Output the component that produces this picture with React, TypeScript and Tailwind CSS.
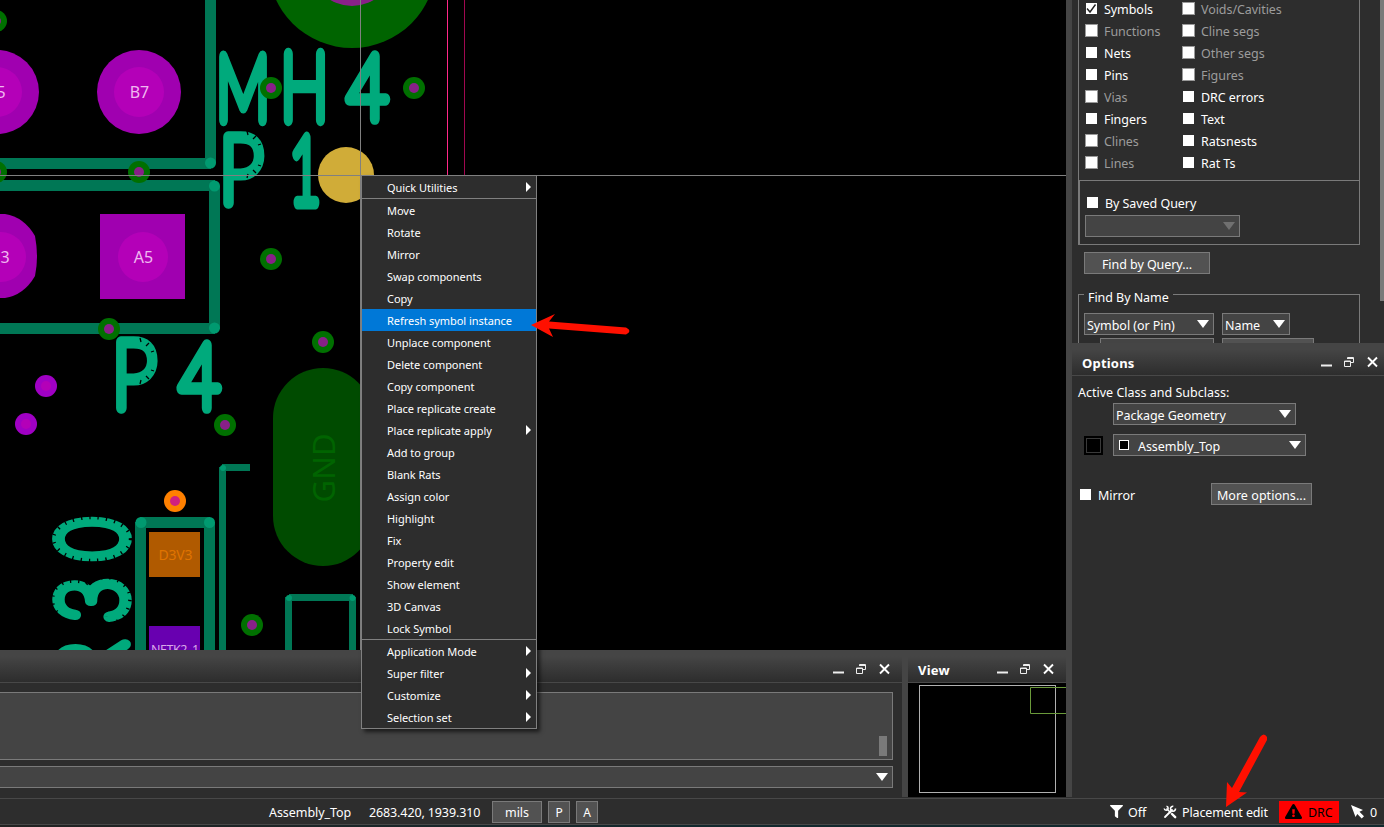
import React from "react";
import { FaFilter, FaExclamationTriangle } from "react-icons/fa";

const vias: [number, number, string, string][] = [
  [-4, 21, "#007000", "#882088"],
  [271, 88, "#007000", "#882088"],
  [414, 88, "#007000", "#882088"],
  [-4, 172, "#007000", "#882088"],
  [139, 172, "#007000", "#882088"],
  [271, 259, "#007000", "#882088"],
  [109, 329, "#007000", "#882088"],
  [323, 342, "#007000", "#882088"],
  [225, 425, "#007000", "#882088"],
  [252, 625, "#007000", "#882088"],
  [175, 501, "#ff8000", "#d02080"],
  [46, 386, "#a000c4", "#b400b8"],
  [26, 424, "#a000c4", "#b400b8"],
];

type SilkProps = { ch: string; cx: number; base: number; size: number; sx: number };

function Silk({ ch, cx, base, size, sx }: SilkProps) {
  return (
    <text
      transform={`translate(${cx} ${base}) scale(${sx} 1)`}
      textAnchor="middle"
      fontFamily="Lato, sans-serif"
      fontWeight="100"
      fontSize={size}
      fill="#00aa7c"
      stroke="#00aa7c"
      strokeWidth="10.500"
      strokeLinejoin="round"
      className="[vector-effect:non-scaling-stroke]"
    >
      {ch}
    </text>
  );
}

function Board() {
  return (
    <svg width="1066" height="650" viewBox="0 0 1066 650" className="block shrink-0 bg-black" fontFamily="'Noto Sans', sans-serif">
      <circle cx="352" cy="-36" r="84" fill="#006400" />
      <circle cx="352" cy="-36" r="42" fill="#882088" />
      <circle cx="139" cy="92" r="42" fill="#a000b0" />
      <circle cx="139" cy="92" r="25" fill="#b400b8" />
      <circle cx="-3" cy="92" r="42" fill="#a000b0" />
      <circle cx="-3" cy="92" r="25" fill="#b400b8" />
      <rect x="100" y="214" width="85" height="85" fill="#a000b0" />
      <circle cx="143" cy="257" r="25" fill="#b400b8" />
      <path d="M-10 214H5Q24 217 35 236Q39 257 35 276Q24 295 5 298H-10Z" fill="#a000b0" />
      <circle cx="1" cy="257" r="25" fill="#b400b8" />
      <g fill="#f0b8f0" fontSize="16" textAnchor="middle">
        <text x="139.5" y="98">B7</text>
        <text x="143.5" y="263">A5</text>
        <text x="1" y="98">5</text>
        <text x="3" y="263">.3</text>
      </g>
      <g fill="#007755">
        <path d="M205 0H216V163H205ZM0 158H211V169H0Z" />
        <path d="M0 180H215V191H0ZM209 186H220V329H209ZM0 323H215V334H0Z" />
        <path d="M135 522H146V650H135ZM204 522H215V650H204ZM140 517H210V528H140Z" />
        <path d="M219 467H226V650H219ZM222 464H250V471H222Z" />
        <path d="M285 597H292V650H285ZM349 597H356V650H349ZM289 594H353V601H289Z" />
      </g>
      <g fill="#009a70">
        <circle cx="210.500" cy="163" r="5.500" />
        <circle cx="214.500" cy="186" r="5.500" />
        <circle cx="214.500" cy="328" r="5.500" />
        <circle cx="141" cy="522.500" r="5.500" />
        <circle cx="209.500" cy="522.500" r="5.500" />
        <circle cx="223" cy="468" r="3" />
        <circle cx="289" cy="598" r="3" />
        <circle cx="352.500" cy="598" r="3" />
      </g>
      <Silk ch="M" cx={243} base={119.500} size={91} sx={0.66} />
      <Silk ch="H" cx={304.500} base={119.500} size={94} sx={0.68} />
      <Silk ch="4" cx={367.500} base={119} size={91} sx={0.78} />
      <Silk ch="P" cx={241} base={202.500} size={94} sx={0.85} />
      <Silk ch="1" cx={305} base={203} size={93} sx={0.57} />
      <Silk ch="P" cx={134} base={408} size={95} sx={0.85} />
      <Silk ch="4" cx={199.500} base={408} size={91} sx={0.78} />
      <g transform="rotate(-90)">
        <Silk ch="0" cx={-539} base={125} size={94} sx={0.76} />
        <Silk ch="3" cx={-600} base={125} size={94} sx={0.82} />
        <Silk ch="R" cx={-664} base={125} size={94} sx={0.78} />
      </g>
      <g stroke="#000" strokeWidth="1.300" fill="none">
        <ellipse cx="92" cy="539" rx="38.500" ry="21.500" strokeWidth="3.500" strokeDasharray="1.300 7" />
        <path d="M57 612Q50 605 54 591Q63 578 82 582" strokeWidth="3.500" strokeDasharray="1.300 7" />
        <path d="M86 584Q95 576 112 578Q131 585 130 600Q128 616 116 622" strokeWidth="3.500" strokeDasharray="1.300 7" />
        <path d="M247 131l1 4M256 136l-3 3M261 144l-3 1M261 166l-3-1M256 173l-3-3M247 178l1-4" />
        <path d="M140 338l1 4M149 343l-3 3M154 351l-3 1M154 371l-3-1M149 379l-3-3M140 384l1-4" />
      </g>
      <circle cx="346" cy="175" r="28" fill="#d0ac38" />
      <rect x="273" y="368" width="100" height="198" rx="50" fill="#004b00" />
      <text transform="translate(335 468) rotate(-90)" textAnchor="middle" fontSize="31" textLength="69" fill="#006400">
        GND
      </text>
      <rect x="149" y="532" width="51" height="45" fill="#b05a00" />
      <text x="175.500" y="560" textAnchor="middle" fontSize="14" textLength="34" fill="#e07400">
        D3V3
      </text>
      <rect x="149" y="626" width="51" height="24" fill="#6800b0" />
      <text x="175" y="654" textAnchor="middle" fontSize="12.500" textLength="48" fill="#d8a8e8">
        NETK2_1
      </text>
      {vias.map(([x, y, outer, inner]) => (
        <g key={`${x}-${y}`}>
          <circle cx={x} cy={y} r="11" fill={outer} />
          <circle cx={x} cy={y} r="5" fill={inner} />
        </g>
      ))}
      <rect x="447" y="0" width="1" height="175" fill="#ff2888" />
      <rect x="464" y="0" width="1" height="175" fill="#a00850" />
      <rect x="0" y="175" width="1066" height="1" fill="#808080" />
      <rect x="360" y="0" width="1" height="650" fill="#808080" />
    </svg>
  );
}

type Item = [label: string, submenu?: boolean];

const menuGroups: Item[][] = [
  [["Quick Utilities", true]],
  [
    ["Move"], ["Rotate"], ["Mirror"], ["Swap components"], ["Copy"], ["Refresh symbol instance"],
    ["Unplace component"], ["Delete component"], ["Copy component"], ["Place replicate create"],
    ["Place replicate apply", true], ["Add to group"], ["Blank Rats"], ["Assign color"], ["Highlight"],
    ["Fix"], ["Property edit"], ["Show element"], ["3D Canvas"], ["Lock Symbol"],
  ],
  [["Application Mode", true], ["Super filter", true], ["Customize", true], ["Selection set", true]],
];

function ContextMenu() {
  return (
    <div className="absolute top-[175px] left-[361px] w-[176px] divide-y divide-[#808080] border border-[#808080] bg-[#2d2d2d] text-[11px] tracking-[-0.04px] shadow-[3px_3px_4px_rgba(0,0,0,0.6)]">
      {menuGroups.map((group, i) => (
        <div key={i}>
          {group.map(([label, sub]) => (
            <div
              key={label}
              className={
                label.startsWith("Refresh")
                  ? "flex h-[22px] items-center justify-between bg-[#0078d7] pr-[5px] pl-[25px]"
                  : "flex h-[22px] items-center justify-between pr-[5px] pl-[25px]"
              }
            >
              <span className="pt-[2px] leading-5">{label}</span>
              {sub && (
                <svg width="5" height="10" viewBox="0 0 5 10" className="mb-px" fill="#fff">
                  <path d="M0 0L5 5L0 10Z" />
                </svg>
              )}
            </div>
          ))}
        </div>
      ))}
    </div>
  );
}

function WindowButtons() {
  return (
    <svg width="58" height="12" viewBox="0 0 58 12" fill="none" stroke="#eee" className="mb-[2px]">
      <path d="M0 9.500H11" strokeWidth="2" />
      <path d="M26.500 3V1.500H32.500V6.500H30M26 2.500H33" />
      <path d="M24.500 5H29.500V10.500H23.500V5ZM23 5.500H30" />
      <path d="M47 1.500L56 10.500M56 1.500L47 10.500" strokeWidth="1.900" stroke="#fff" />
    </svg>
  );
}

function TitleBar({ title }: { title?: string }) {
  return (
    <div className="flex h-[33px] items-center justify-between border-b border-[#484848] bg-linear-to-b from-[#454545] from-20% to-[#2d2d2d] pt-[7px] pr-[11px] pl-[10px]">
      <span className="text-[13px] font-bold tracking-[0.2px]">{title}</span>
      <WindowButtons />
    </div>
  );
}

function Down({ dim }: { dim?: boolean }) {
  return (
    <svg width="12" height="8" viewBox="0 0 12 8" className="shrink-0" fill={dim ? "#707070" : "#fff"}>
      <path d="M0 0H12L6 8Z" />
    </svg>
  );
}

const box = "flex h-[22px] shrink-0 items-center border border-[#7a7a7a]";

function Check({ on, dim }: { on?: boolean; dim?: boolean }) {
  return (
    <span className={dim ? "flex size-[13px] shrink-0 border border-[#999] bg-white" : "m-px flex size-[11px] shrink-0 bg-white"}>
      {on && (
        <svg width="11" height="11" viewBox="0 0 11 11" fill="none" stroke="#222" strokeWidth="1.400">
          <path d="M1 5.500L4 9L9.500 1.500" />
        </svg>
      )}
    </span>
  );
}

type Filter = [string, boolean];
const leftFilters: Filter[] = [["Symbols", true], ["Functions", false], ["Nets", true], ["Pins", true], ["Vias", false], ["Fingers", true], ["Clines", false], ["Lines", false]];
const rightFilters: Filter[] = [["Voids/Cavities", false], ["Cline segs", false], ["Other segs", false], ["Figures", false], ["DRC errors", true], ["Text", true], ["Ratsnests", true], ["Rat Ts", true]];

function FilterColumn({ items }: { items: Filter[] }) {
  return (
    <div className="w-[97px] whitespace-nowrap">
      {items.map(([label, enabled]) => (
        <div key={label} className={enabled ? "flex h-[22px] items-center gap-[6px]" : "flex h-[22px] items-center gap-[6px] text-[#9c9c9c]"}>
          <span className="pb-[3px]"><Check on={label === "Symbols"} dim={!enabled} /></span>
          {label}
        </div>
      ))}
    </div>
  );
}

function FindPanel() {
  return (
    <div className="flex h-[343px] shrink-0 justify-between overflow-hidden pl-[6px] whitespace-nowrap">
      <div className="w-[282px]">
        <div className="flex h-[180px] border-x border-[#7a7a7a] pl-[6px]">
          <div className="-mt-px flex">
            <FilterColumn items={leftFilters} />
            <FilterColumn items={rightFilters} />
          </div>
        </div>
        <div className="h-[65px] border border-l-2 border-[#7a7a7a] pt-[13px] pl-[5px]">
          <div className="flex h-[20px] items-center gap-[6px] pl-[1px]">
            <span className="pb-[3px]"><Check /></span>
            <span className="pb-px">By Saved Query</span>
          </div>
          <div className={`${box} mt-px w-[155px] justify-end bg-[#444] pr-[4px]`}><Down dim /></div>
        </div>
        <div className={`${box} mt-[7px] ml-[6px] w-[126px] justify-center bg-[#525252] pt-[4px]`}>Find by Query...</div>
        <div className="mt-[20px] h-[80px] border border-[#7a7a7a] pl-[5px]">
          <div className="-mt-[8px] w-[89px] bg-[#2d2d2d] pl-[4px] leading-[22px]">Find By Name</div>
          <div className="mt-[4px] flex gap-2">
            <div className={`${box} w-[130px] justify-between bg-[#444] pr-[4px] pl-[2px]`}><span className="pt-[4px]">Symbol (or Pin)</span><Down /></div>
            <div className={`${box} w-[68px] justify-between bg-[#444] pr-[4px] pl-[2px]`}><span className="pt-[4px]">Name</span><Down /></div>
          </div>
          <div className="mt-[3px] ml-4 flex gap-2">
            <div className={`${box} w-[114px] bg-[#444]`} />
            <div className={`${box} w-[92px] bg-[#525252]`} />
          </div>
        </div>
      </div>
      <div className="h-[301px] w-[4px] bg-[#7a7a7a]" />
    </div>
  );
}

function OptionsPanel() {
  return (
    <div className="whitespace-nowrap">
      <div className="-mr-[6px]"><TitleBar title="Options" /></div>
      <div className="pt-[7px] pl-[6px]">
        <div className="h-[20px] leading-[20px] tracking-normal">Active Class and Subclass:</div>
        <div className={`${box} ml-[35px] w-[183px] justify-between bg-[#444] pr-[4px] pl-[2px]`}><span className="pt-[4px]">Package Geometry</span><Down /></div>
        <div className="mt-[9px] flex items-center gap-[10px] pl-[6px]">
          <div className="size-[19px] border border-black bg-black p-px"><div className="size-full border border-[#3a3a3a]" /></div>
          <div className={`${box} w-[193px] bg-[#444] pr-[4px] pl-[5px]`}>
            <span className="mb-px size-[10px] border border-white bg-black" />
            <span className="flex-1 pt-[4px] pl-[9px]">Assembly_Top</span>
            <Down />
          </div>
        </div>
        <div className="mt-[27px] flex items-center pl-px">
          <span className="flex w-[132px] items-center gap-[6px]"><Check /><span className="pt-[3px]">Mirror</span></span>
          <div className={`${box} w-[101px] justify-center bg-[#525252] pt-[4px] tracking-[0.05px]`}>More options...</div>
        </div>
      </div>
    </div>
  );
}

function BottomPanels() {
  return (
    <div className="flex h-[147px]">
      <div className="w-[902px]">
        <TitleBar />
        <div className="pt-[9px] pr-[9px]">
          <div className="flex h-[68px] items-end justify-end border border-l-0 border-[#7a7a7a] bg-[#444] pr-[5px] pb-[3px]">
            <div className="h-[20px] w-[8px] bg-[#7a7a7a]" />
          </div>
          <div className="mt-[6px] flex h-[22px] items-center justify-end border border-l-0 border-[#7a7a7a] bg-[#444] pr-[4px]"><Down /></div>
        </div>
      </div>
      <div className="w-[6px] bg-[#454545]" />
      <div className="w-[158px] bg-black">
        <TitleBar title="View" />
        <svg width="158" height="114" viewBox="0 0 158 114" fill="none">
          <rect x="11.500" y="2.500" width="136" height="107" stroke="#b0b0b0" />
          <path d="M158 4.500H122.500V30.500H158" stroke="#6a9a3a" />
        </svg>
      </div>
    </div>
  );
}

function StatusBar() {
  return (
    <div className="flex h-[27px] items-center border-y border-[#484848] whitespace-nowrap">
      <span className="ml-[269px] w-[100px] pt-[2px]">Assembly_Top</span>
      <span className="w-[123px] pt-[2px] tracking-[-0.12px]">2683.420, 1939.310</span>
      <div className={`${box} mr-[6px] w-[50px] justify-center bg-[#525252] pt-[3px]`}>mils</div>
      <div className={`${box} mr-[6px] w-[22px] justify-center bg-[#525252] pt-[3px] text-[12px]`}>P</div>
      <div className={`${box} w-[22px] justify-center bg-[#525252] pt-[3px] text-[12px]`}>A</div>
      <div className="flex-1" />
      <FaFilter size={13} />
      <span className="mr-[17px] ml-[5px] w-[18px] pt-[2px]">Off</span>
      <svg width="14" height="14" viewBox="0 0 14 14" fill="none" stroke="#fff">
        <path d="M2 12L9 5" strokeWidth="1.800" strokeLinecap="round" />
        <path d="M12.500 3.500A2.500 2.500 0 1 1 10.300 1.200" strokeWidth="1.600" />
        <path d="M3.500 3.500L8 8" strokeWidth="1.500" />
        <path d="M1.200 3.500A2 2 0 1 0 3.500 1.200" strokeWidth="1.500" />
        <path d="M9 9L12.200 12.200" strokeWidth="2.400" strokeLinecap="round" />
      </svg>
      <span className="ml-[5px] w-[97px] pt-[2px] tracking-[-0.12px]">Placement edit</span>
      <div className="flex h-[22px] w-[60px] items-center gap-[6px] bg-[#ff0000] pl-[6px] text-black">
        <FaExclamationTriangle size={17} /><span className="pt-[2px]">DRC</span>
      </div>
      <svg width="13" height="14" viewBox="0 0 13 14" fill="#fff" className="ml-[12px]">
        <path d="M0 0L12 5L8.500 6.700L13 11.200L10.700 13.500L6.300 9L4.500 12Z" />
      </svg>
      <span className="ml-[6px] w-[14px] pt-[2px]">0</span>
    </div>
  );
}

export default function App() {
  return (
    <div className="relative flex h-[827px] w-[1384px] flex-col overflow-hidden bg-[#2d2d2d] font-['Noto_Sans',sans-serif] text-[12.500px] leading-[18px] tracking-[-0.06px] text-white">
      <div className="flex h-[798px] shrink-0">
        <div className="w-[1066px]">
          <Board />
          <BottomPanels />
        </div>
        <div className="h-[797px] w-[6px] bg-[#454545]" />
        <div className="w-[312px]">
          <FindPanel />
          <OptionsPanel />
        </div>
      </div>
      <StatusBar />
      <div className="h-[2px] bg-linear-to-r from-[#222] via-[#12282d] to-[#12282d]" />
      <ContextMenu />
      <svg className="pointer-events-none absolute inset-0" width="1384" height="827" viewBox="0 0 1384 827" fill="#ff1000">
        <path d="M531 325L555 314L549 321.500L626 327.500Q633 331 626 334.500L549 328.500L553 337Z" />
        <path d="M1226 807L1227 782L1232 788L1260 737Q1264 732 1267 737V740L1239 792L1247 792.500Z" />
      </svg>
    </div>
  );
}
